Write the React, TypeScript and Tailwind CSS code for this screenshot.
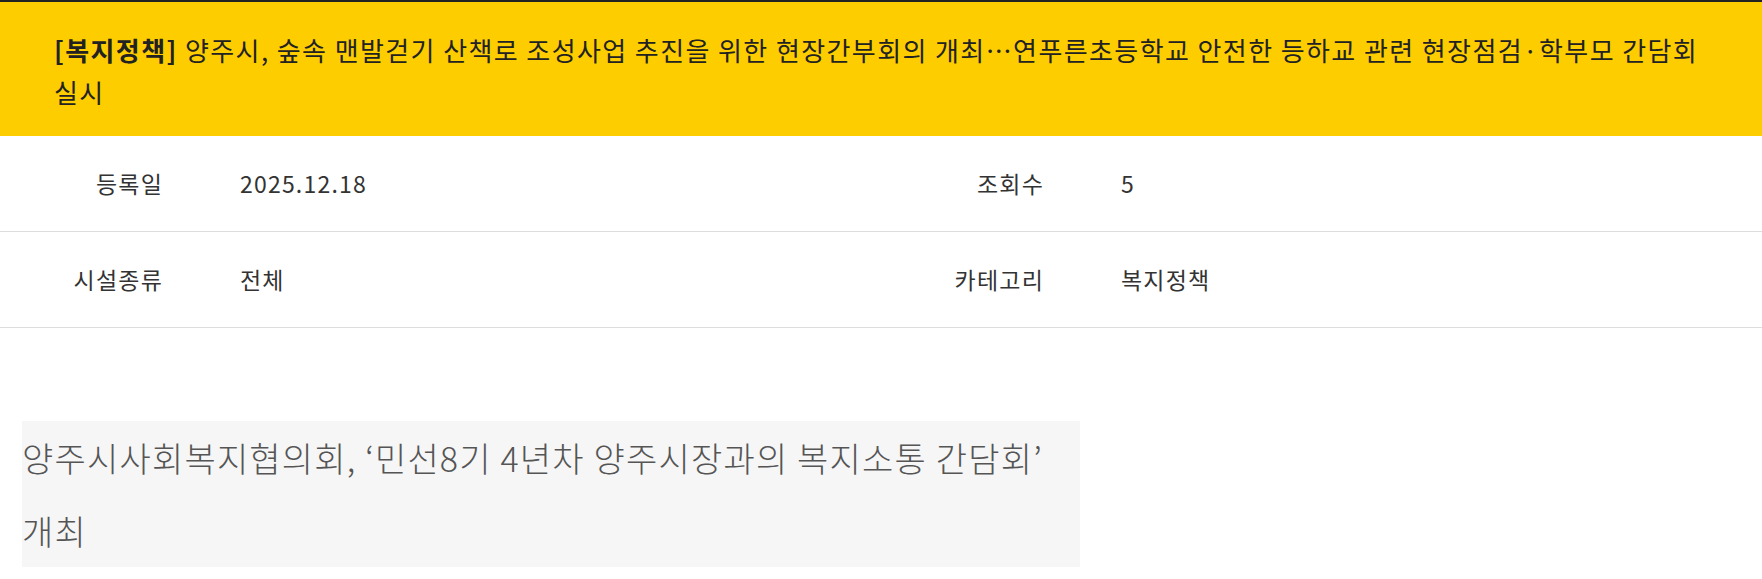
export default function App() {
  const rows = [
    [
      ["등록일", "2025.12.18"],
      ["조회수", "5"],
    ],
    [
      ["시설종류", "전체"],
      ["카테고리", "복지정책"],
    ],
  ]

  return (
    <div className="min-h-[579px] w-[1762px] bg-white font-['Noto_Sans_CJK_KR','Noto_Sans',sans-serif] text-[#333]">
      <h2 className="border-t-2 border-[#222] bg-[#fdcd00] px-[54px] pb-[23px] pt-[27px] text-[26px] font-normal leading-[42px] tracking-[1.4px] text-[#222]">
        <strong className="font-bold">[복지정책]</strong> 양주시, 숲속 맨발걷기 산책로 조성사업 추진을 위한
        현장간부회의 개최…연푸른초등학교 안전한 등하교 관련 현장점검·학부모 간담회 실시
      </h2>

      {rows.map((row, i) => (
        <div key={i} className="grid h-[96px] grid-cols-2 border-b border-[#ddd] text-[23px] tracking-[1.2px]">
          {row.map(([label, value]) => (
            <div key={label} className="flex items-center">
              <span className="w-[163px] text-right">{label}</span>
              <span className="ml-[77px]">{value}</span>
            </div>
          ))}
        </div>
      ))}

      <div className="ml-[22px] mt-[93px] w-[1058px] bg-[#f6f6f6] text-[34px] font-light leading-[73px] tracking-[1.2px] text-[#555]">
        양주시사회복지협의회, ‘민선8기 4년차 양주시장과의 복지소통 간담회’ 개최
      </div>
    </div>
  )
}
